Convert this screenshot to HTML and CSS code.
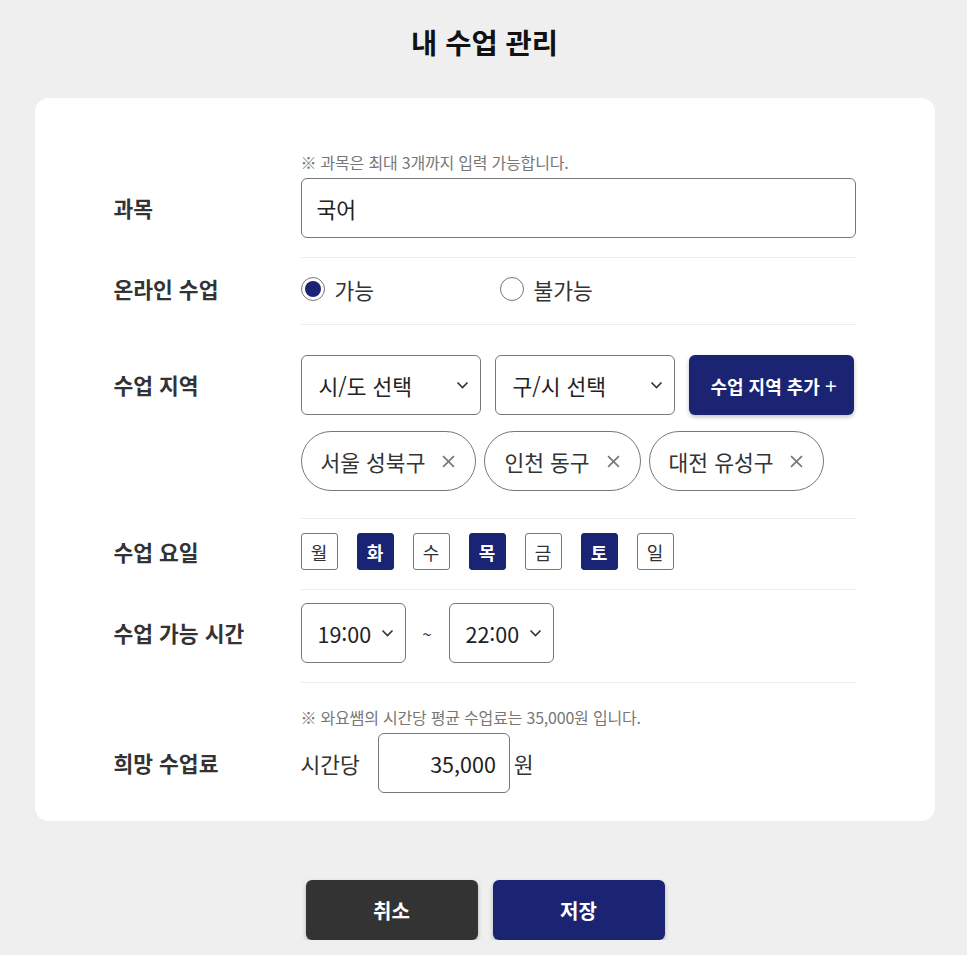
FILE: index.html
```html
<!DOCTYPE html>
<html lang="ko">
<head>
    <meta charset="UTF-8">
    <meta name="viewport" content="width=device-width, initial-scale=1.0">
    <title>내 수업 관리</title>
    <link rel="stylesheet" href="styles.css">
</head>
<body>
    <h1 class="page-title">내 수업 관리</h1>

    <div class="card">
        <!-- 과목 -->
        <div class="row row--note">
            <div class="row-label">과목</div>
            <div class="row-field">
                <p class="note">※ 과목은 최대 3개까지 입력 가능합니다.</p>
                <input class="text-input" type="text" value="국어">
            </div>
        </div>

        <!-- 온라인 수업 -->
        <div class="row row--radio">
            <div class="row-label">온라인 수업</div>
            <div class="row-field radios">
                <label class="radio"><span class="radio-dot checked"></span>가능</label>
                <label class="radio"><span class="radio-dot"></span>불가능</label>
            </div>
        </div>

        <!-- 수업 지역 -->
        <div class="row row--area">
            <div class="row-label">수업 지역</div>
            <div class="row-field">
                <div class="area-selects">
                    <div class="select select--area">시/도 선택
                        <svg class="chevron" viewBox="0 0 12 8"><path d="M1 1.5 L6 6.5 L11 1.5"/></svg>
                    </div>
                    <div class="select select--area">구/시 선택
                        <svg class="chevron" viewBox="0 0 12 8"><path d="M1 1.5 L6 6.5 L11 1.5"/></svg>
                    </div>
                    <button class="btn-add">수업 지역 추가 <span class="plus">+</span></button>
                </div>
                <div class="tags">
                    <span class="tag">서울 성북구
                        <svg class="tag-x" viewBox="0 0 12 12"><path d="M1 1 L11 11 M11 1 L1 11"/></svg>
                    </span>
                    <span class="tag">인천 동구
                        <svg class="tag-x" viewBox="0 0 12 12"><path d="M1 1 L11 11 M11 1 L1 11"/></svg>
                    </span>
                    <span class="tag">대전 유성구
                        <svg class="tag-x" viewBox="0 0 12 12"><path d="M1 1 L11 11 M11 1 L1 11"/></svg>
                    </span>
                </div>
            </div>
        </div>

        <!-- 수업 요일 -->
        <div class="row row--days">
            <div class="row-label">수업 요일</div>
            <div class="row-field days">
                <span class="day">월</span>
                <span class="day selected">화</span>
                <span class="day">수</span>
                <span class="day selected">목</span>
                <span class="day">금</span>
                <span class="day selected">토</span>
                <span class="day">일</span>
            </div>
        </div>

        <!-- 수업 가능 시간 -->
        <div class="row row--time">
            <div class="row-label">수업 가능 시간</div>
            <div class="row-field times">
                <div class="select select--time">19:00
                    <svg class="chevron" viewBox="0 0 12 8"><path d="M1 1.5 L6 6.5 L11 1.5"/></svg>
                </div>
                <span class="tilde">~</span>
                <div class="select select--time">22:00
                    <svg class="chevron" viewBox="0 0 12 8"><path d="M1 1.5 L6 6.5 L11 1.5"/></svg>
                </div>
            </div>
        </div>

        <!-- 희망 수업료 -->
        <div class="row row--note row--last">
            <div class="row-label">희망 수업료</div>
            <div class="row-field">
                <p class="note">※ 와요쌤의 시간당 평균 수업료는 35,000원 입니다.</p>
                <div class="fee">
                    <span>시간당</span>
                    <input class="text-input fee-input" type="text" value="35,000">
                    <span class="won">원</span>
                </div>
            </div>
        </div>
    </div>

    <div class="actions">
        <button class="btn btn-cancel">취소</button>
        <button class="btn btn-save">저장</button>
    </div>
</body>
</html>
```

FILE: styles.css
```css
/* Page base */
body {
    margin: 0;
    padding-left: 2px;
    background: #efefef;
    font-family: "Noto Sans CJK KR", "Noto Sans", sans-serif;
    color: #222;
}

.page-title {
    margin: 0;
    padding-top: 22px;
    height: 40px;
    line-height: 40px;
    text-align: center;
    font-size: 28.5px;
    font-weight: 700;
    color: #111;
    margin-bottom: 36px;
}

/* White card holding the form */
.card {
    width: 742px;
    margin: 0 auto;
    background: #fff;
    border-radius: 14px;
    padding: 40px 79px 9px;
}

/* Each form row: label column + field column */
.row {
    display: flex;
}

.row-label {
    width: 187px;
    flex-shrink: 0;
    height: 60px;
    line-height: 60px;
    padding-top: 14px;
    font-size: 21.5px;
    font-weight: 700;
    color: #333;
}

.row-field {
    flex: 1;
    padding: 14px 0 19px;
    border-bottom: 1px solid #ececec;
}

.row--note .row-label {
    padding-top: 40px;
}

.row--radio .row-label {
    height: 34px;
    line-height: 34px;
}

.row--radio .row-field {
    padding-bottom: 18px;
}

.row--area .row-label,
.row--area .row-field {
    padding-top: 30px;
}

.row--area .row-field {
    padding-bottom: 27px;
}

.row--days .row-label {
    height: 37px;
    line-height: 37px;
}

.row--time .row-label,
.row--time .row-field {
    padding-top: 13px;
}

.row--last .row-field {
    border-bottom: none;
    padding-top: 24px;
}

.row--last .row-label {
    padding-top: 50px;
}

/* Small gray notes above inputs */
.note {
    margin: 0 0 6px;
    font-size: 16px;
    line-height: 20px;
    color: #777;
    letter-spacing: -0.2px;
}

/* Text inputs */
.text-input {
    box-sizing: border-box;
    width: 100%;
    height: 60px;
    padding: 0 15px;
    border: 1px solid #777;
    border-radius: 6px;
    font-family: inherit;
    font-size: 21.5px;
    color: #222;
    outline: none;
}

/* Radio options */
.radios {
    display: flex;
    height: 34px;
    align-items: center;
}

.radio {
    display: flex;
    align-items: center;
    width: 199px;
    font-size: 21.5px;
    color: #333;
}

.radio-dot {
    box-sizing: border-box;
    width: 24px;
    height: 24px;
    border: 1px solid #777;
    border-radius: 50%;
    margin-right: 10px;
    position: relative;
}

.radio-dot.checked::after {
    content: "";
    position: absolute;
    left: 3px;
    top: 3px;
    width: 16px;
    height: 16px;
    border-radius: 50%;
    background: #1a2472;
}

/* Select boxes */
.select {
    box-sizing: border-box;
    height: 60px;
    display: flex;
    align-items: center;
    justify-content: space-between;
    border: 1px solid #777;
    border-radius: 6px;
    font-size: 21.5px;
    color: #222;
}

.chevron {
    width: 13px;
    height: 8px;
    fill: none;
    stroke: #333;
    stroke-width: 1.6;
}

.area-selects {
    display: flex;
    gap: 14px;
}

.select--area {
    width: 180px;
    padding: 0 11px 0 17px;
}

.btn-add {
    width: 165px;
    height: 60px;
    border: none;
    border-radius: 6px;
    background: #1a2472;
    color: #fff;
    font-family: inherit;
    font-size: 18px;
    font-weight: 700;
    box-shadow: 0 2px 4px rgba(0, 0, 0, 0.25);
    padding: 0 0 0 5px;
    white-space: nowrap;
}

.plus {
    font-weight: 400;
    font-size: 21px;
}

/* Selected area tags */
.tags {
    display: flex;
    gap: 8px;
    margin-top: 16px;
}

.tag {
    box-sizing: border-box;
    height: 60px;
    display: flex;
    align-items: center;
    padding: 0 20px 0 19px;
    border: 1px solid #777;
    border-radius: 30px;
    font-size: 21.5px;
    color: #333;
}

.tag-x {
    width: 13px;
    height: 13px;
    margin-left: 17px;
    stroke: #777;
    stroke-width: 1.5;
}

/* Day toggles */
.days {
    display: flex;
    gap: 19px;
}

.day {
    box-sizing: border-box;
    width: 37px;
    height: 37px;
    display: flex;
    align-items: center;
    justify-content: center;
    border: 1px solid #777;
    border-radius: 3px;
    font-size: 18px;
    color: #333;
}

.day.selected {
    background: #1a2472;
    border-color: #1a2472;
    color: #fff;
    font-weight: 700;
}

/* Time range */
.times {
    display: flex;
    align-items: center;
}

.select--time {
    width: 105px;
    padding: 0 11px 0 16px;
}

.tilde {
    width: 43px;
    text-align: center;
    font-size: 17px;
    color: #333;
}

/* Fee input */
.fee {
    display: flex;
    align-items: center;
    font-size: 21.5px;
    color: #333;
}

.fee-input {
    width: 132px;
    margin-left: 18px;
    text-align: right;
    padding-right: 13px;
}

.won {
    margin-left: 4px;
}

/* Bottom buttons */
.actions {
    display: flex;
    justify-content: center;
    gap: 15px;
    margin-top: 59px;
    padding-left: 1px;
}

.btn {
    width: 172px;
    height: 60px;
    border: none;
    border-radius: 6px;
    color: #fff;
    font-family: inherit;
    font-size: 20px;
    font-weight: 700;
    box-shadow: 0 2px 4px rgba(0, 0, 0, 0.25);
}

.btn-cancel {
    background: #333;
}

.btn-save {
    background: #1a2472;
}
```
